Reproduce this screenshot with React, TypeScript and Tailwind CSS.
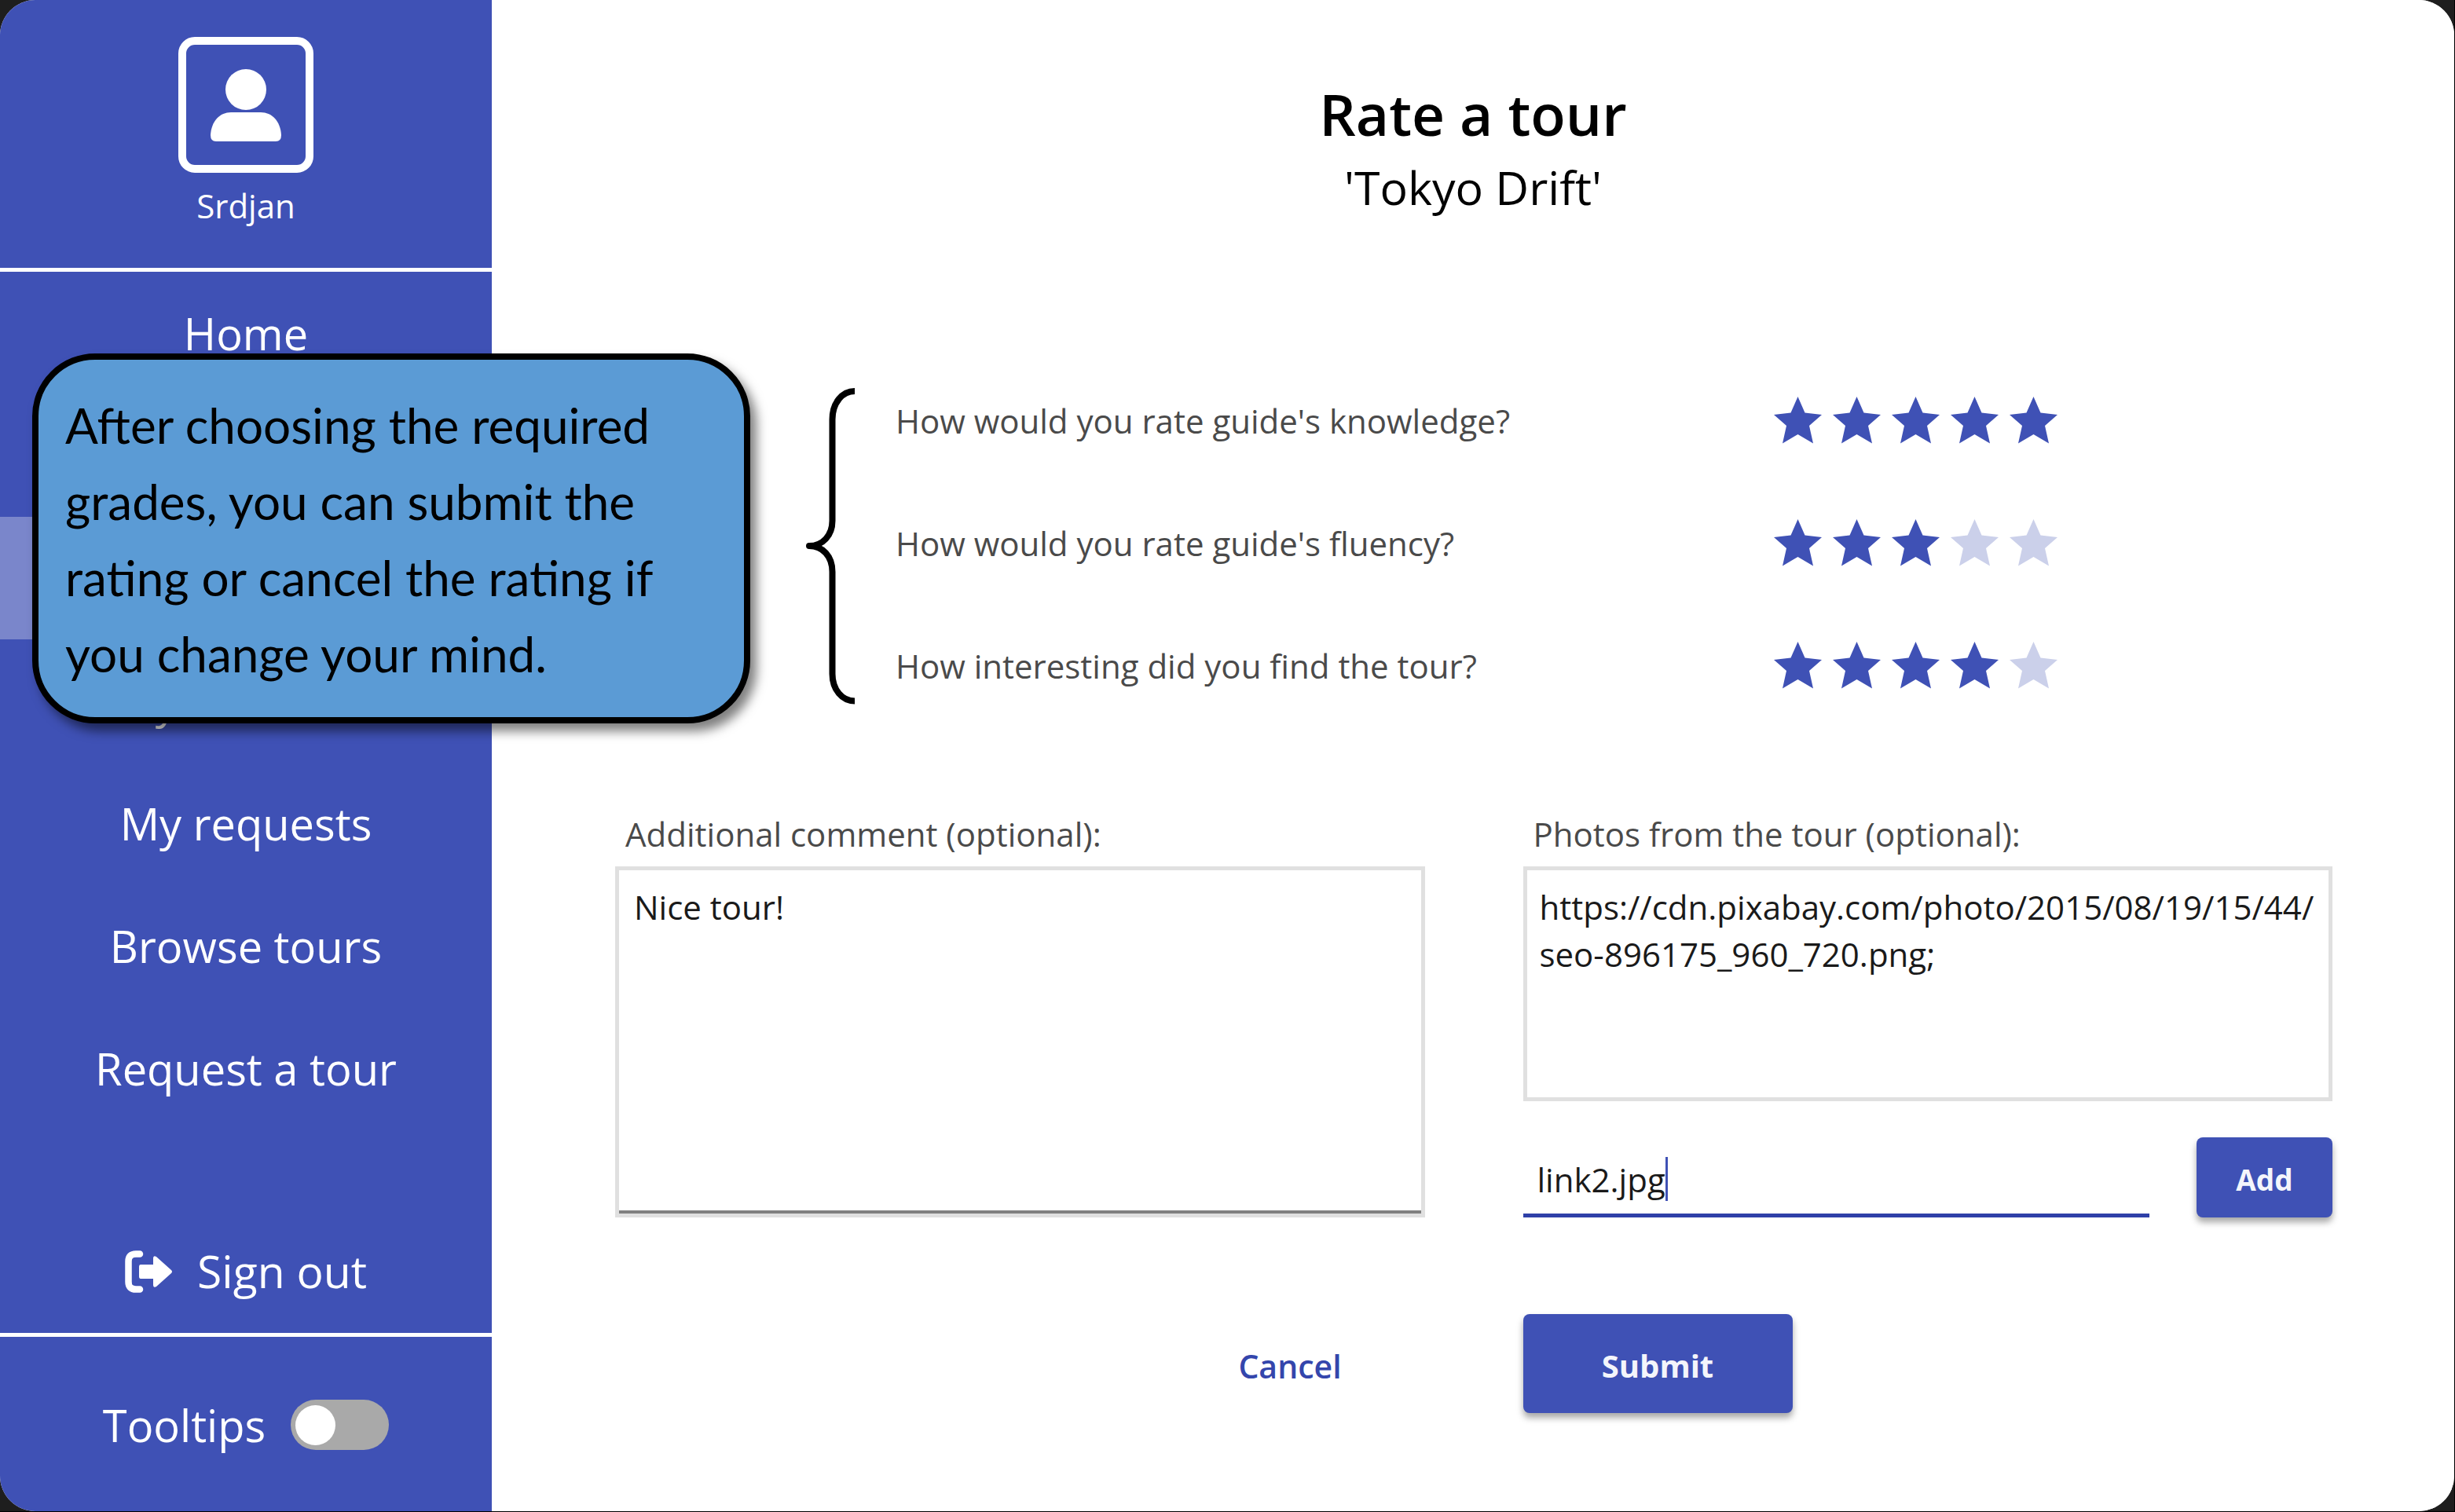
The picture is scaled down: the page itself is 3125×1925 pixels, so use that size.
import React, { useState } from "react";

const STAR = "30.5,0 39.5,20.5 61,23 45,37 50,59.5 30.5,48 11,59.5 16,37 0,23 21.5,20.5";

function Avatar() {
  return (
    <svg viewBox="0 0 172 173" className="h-[173px] w-[172px]" fill="none" aria-hidden="true">
      <rect x="5" y="5" width="162" height="163" rx="16" stroke="white" strokeWidth="10" />
      <circle cx="86" cy="67" r="26" fill="white" />
      <path d="M48 133h76q7 0 7-8c-1-18-12-29-26-29H67c-14 0-25 11-26 29q0 8 7 8z" fill="white" />
    </svg>
  );
}

function SignOutIcon() {
  return (
    <svg viewBox="0 0 60 54" className="h-[54px] w-[60px]" fill="none" aria-hidden="true">
      <path d="M19 4.500h-5Q4.500 4.500 4.500 14v26q0 9.500 9.500 9.500h5" stroke="white" strokeWidth="8.500" strokeLinecap="round" />
      <path d="M20 18h16V10q0-4 4-2L59 25q2 2 0 4L40 46q-4 2-4-2v-8H20q-2 0-2-3V21q0-3 2-3z" fill="white" />
    </svg>
  );
}

function Brace() {
  return (
    <svg viewBox="0 0 64 468" className="h-[468px] w-[64px] shrink-0" fill="none" aria-hidden="true">
      <path
        d="M62 40C46 40 33.500 55 33.500 76V205C33.500 224 21 237 4 237C21 237 33.500 250 33.500 270V400C33.500 420 46 434.500 62 434.500"
        stroke="black"
        strokeWidth="8"
        strokeLinejoin="round"
      />
    </svg>
  );
}

function Rating({ id, question, initial }: { id: string; question: string; initial: number }) {
  const [value, setValue] = useState(initial);
  return (
    <div role="radiogroup" aria-labelledby={id} className="flex h-[156px] items-center justify-between">
      <span id={id} className="text-[42px] leading-[60px] text-[#4a4a4a]">{question}</span>
      <div className="flex">
        {[1, 2, 3, 4, 5].map((n) => (
          <label key={n} className="relative flex h-[62px] w-[75px] cursor-pointer justify-center">
            <input
              type="radio"
              name={id}
              value={n}
              checked={value === n}
              onChange={() => setValue(n)}
              aria-label={`${n} of 5`}
              className="sr-only"
            />
            <svg viewBox="0 0 61 60" className="h-[60px] w-[61px]" aria-hidden="true">
              <polygon points={STAR} className={n <= value ? "fill-[#3f51b5]" : "fill-[#cbd0ea]"} />
            </svg>
          </label>
        ))}
      </div>
    </div>
  );
}

const NAV = [
  { label: "Home" },
  { name: "Notifications" },
  { name: "My tours", active: true },
  { label: "My vouchers" },
  { label: "My requests" },
  { label: "Browse tours" },
  { label: "Request a tour" },
];

export default function App() {
  const [tooltips, setTooltips] = useState(false);
  return (
    <div className="relative flex min-h-screen border-r border-b border-black bg-[#1e1e1e] font-['Open_Sans',sans-serif]">
      <div className="flex flex-1 overflow-hidden rounded-[45px] bg-white">
        <aside className="flex w-[626px] shrink-0 flex-col bg-[#3f51b5] text-white">
          <div className="flex flex-col items-center border-b-[5px] border-white pt-[47px] pb-[51px]">
            <Avatar />
            <span className="mt-[14px] text-[42px] leading-[56px]">Srdjan</span>
          </div>
          <nav className="flex flex-col">
            {NAV.map((item) => (
              <a
                key={item.label ?? item.name}
                href="#"
                aria-label={item.name}
                className={
                  item.active
                    ? "flex h-[156px] items-center justify-center bg-[#7a86cb] text-[56px]"
                    : "flex h-[156px] items-center justify-center text-[56px]"
                }
              >
                {item.label}
              </a>
            ))}
          </nav>
          <a href="#" className="mt-auto flex h-[156px] items-center justify-center gap-[32px] text-[57px]">
            <SignOutIcon />
            Sign out
          </a>
          <label className="flex h-[227px] items-center justify-center gap-[32px] border-t-[5px] border-white pt-[2px] text-[56px]">
            Tooltips
            <input
              type="checkbox"
              role="switch"
              checked={tooltips}
              onChange={(e) => setTooltips(e.target.checked)}
              className="flex h-[64px] w-[125px] appearance-none items-center rounded-full bg-[#a9a9a9] px-[6px] before:size-[51px] before:rounded-full before:bg-white checked:justify-end checked:bg-[#7a86cb]"
            />
          </label>
        </aside>

        <main className="flex flex-1 flex-col bg-white">
          <header className="pt-[94px] text-center text-black">
            <h1 className="text-[73px] leading-[102px] font-semibold">Rate a tour</h1>
            <p className="text-[59px] leading-[84px]">'Tokyo Drift'</p>
          </header>

          <section className="mt-[178px] flex gap-[50px] pr-[498px] pl-[400px]">
            <Brace />
            <div className="flex-1">
              <Rating id="knowledge" question="How would you rate guide's knowledge?" initial={5} />
              <Rating id="fluency" question="How would you rate guide's fluency?" initial={3} />
              <Rating id="interest" question="How interesting did you find the tour?" initial={4} />
            </div>
          </section>

          <form className="mt-[106px] grid grid-cols-2 gap-x-[125px] pr-[155px] pl-[157px] text-[42px] leading-[60px]" onSubmit={(e) => e.preventDefault()}>
            <div className="flex flex-col">
              <label htmlFor="comment" className="mb-[11px] pl-[13px] text-[#4a4a4a]">
                Additional comment (optional):
              </label>
              <div className="flex h-[447px] border-[5px] border-[#e0e0e0]">
                <textarea
                  id="comment"
                  defaultValue="Nice tour!"
                  className="flex-1 resize-none border-b-[4px] border-[#808080] px-[19px] pt-[17px] text-[#1a1a1a] outline-none"
                />
              </div>
            </div>

            <div className="flex flex-col">
              <label htmlFor="photos" className="mb-[11px] pl-[13px] text-[#4a4a4a]">
                Photos from the tour (optional):
              </label>
              <textarea
                id="photos"
                readOnly
                value={"https://cdn.pixabay.com/photo/2015/08/19/15/44/\nseo-896175_960_720.png;"}
                className="h-[299px] resize-none border-[5px] border-[#e0e0e0] pt-[17px] pl-[16px] text-[#1a1a1a] outline-none"
              />
              <div className="mt-[46px] flex items-end gap-[60px]">
                <div className="relative flex flex-1">
                  <input
                    type="text"
                    aria-label="Photo link"
                    defaultValue="link2.jpg"
                    className="h-[93px] w-full border-b-[5px] border-[#2f40a8] pl-[18px] text-[#1a1a1a] caret-transparent outline-none"
                  />
                  <span className="absolute top-[16px] left-[181px] h-[56px] w-[3px] bg-[#3f51b5]" />
                </div>
                <button
                  type="button"
                  className="h-[102px] w-[173px] rounded-[8px] bg-[#3f51b5] pt-[5px] text-[37px] font-bold text-[#f4f5fb] shadow-[0_6px_8px_rgba(0,0,0,0.35)]"
                >
                  Add
                </button>
              </div>
            </div>

            <div className="mt-[123px] flex justify-end">
              <button type="button" className="h-[126px] w-[343px] pt-[5px] text-[41px] font-semibold text-[#3446ac]">
                Cancel
              </button>
            </div>
            <div className="mt-[123px] flex">
              <button
                type="submit"
                className="h-[126px] w-[343px] rounded-[8px] bg-[#3f51b5] pt-[5px] text-[40px] font-bold text-[#f4f5fb] shadow-[0_6px_8px_rgba(0,0,0,0.35)]"
              >
                Submit
              </button>
            </div>
          </form>
        </main>
      </div>

      <div
        role="tooltip"
        className="absolute top-[450px] left-[41px] h-[471px] w-[914px] rounded-[80px] border-[8px] border-black bg-[#5b9bd5] px-[34px] pt-[35px] font-['Lato',sans-serif] text-[62px] leading-[97px] text-black shadow-[8px_10px_14px_rgba(0,0,0,0.5)]"
      >
        After choosing the required grades, you can submit the rating or cancel the rating if you change your mind.
      </div>
    </div>
  );
}
